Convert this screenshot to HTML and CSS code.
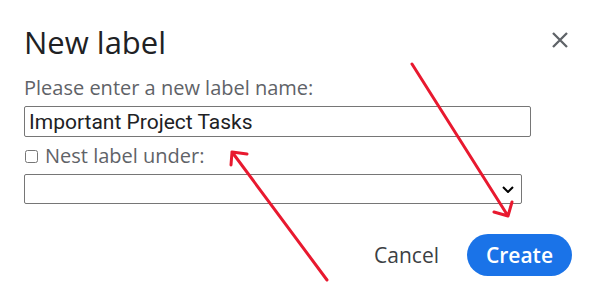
FILE: index.html
```html
<!DOCTYPE html>
<html>
  <head>
    <link rel="stylesheet" href="styles.css">
  </head>
  <body>
    <div class="dialog">
      <div class="header">
        <div class="title">New label</div>
        <button class="close" aria-label="Close">
          <svg width="18" height="18" viewBox="0 0 18 18">
            <path d="M2 2 L16 16 M16 2 L2 16" stroke="#5f6368" stroke-width="2.3" fill="none"/>
          </svg>
        </button>
      </div>
      <div class="label">Please enter a new label name:</div>
      <input class="name" type="text" value="Important Project Tasks">
      <label class="nest"><input type="checkbox">Nest label under:</label>
      <div class="select-wrap">
        <select class="parent"><option></option></select>
        <svg class="chevron" width="12" height="7" viewBox="0 0 12 7">
          <path d="M1 1 L6 6 L11 1" stroke="#000" stroke-width="2" fill="none"/>
        </svg>
      </div>
      <div class="actions">
        <button class="cancel">Cancel</button>
        <button class="create">Create</button>
      </div>
    </div>
    <svg class="arrows" width="600" height="304" viewBox="0 0 600 304">
      <g stroke="#e8192f" stroke-width="3" fill="none" stroke-linecap="round" stroke-linejoin="round">
        <path d="M412 64 L508 216 M494 212 L508 216 L512 202"/>
        <path d="M327 280 L232 152 M247 154 L232 152 L231 165"/>
      </g>
    </svg>
  </body>
</html>
```

FILE: styles.css
```css
body {
    margin: 0;
    background: #fff;
    font-family: "Open Sans", Roboto, sans-serif;
    color: #202124;
}
.dialog {
    width: 600px;
    height: 304px;
    box-sizing: border-box;
    padding: 24px 31px 0 24px;
}
.header {
    display: flex;
    justify-content: space-between;
    align-items: flex-start;
}
.title {
    font-size: 31px;
    line-height: 37px;
}
.close {
    border: none;
    background: none;
    padding: 0;
    margin-top: 7px;
    width: 18px;
    height: 18px;
}
.label, .nest {
    font-size: 20px;
    line-height: 22px;
    color: #5f6368;
}
.label {
    margin-top: 16px;
}
.name {
    display: block;
    box-sizing: border-box;
    width: 507px;
    height: 31px;
    margin: 7px 0 0;
    padding: 0 4px;
    border: 1px solid #767676;
    border-radius: 2px;
    font-family: Roboto, sans-serif;
    font-size: 21px;
    color: #202124;
}
.nest {
    display: flex;
    align-items: center;
    gap: 7px;
    margin-top: 8px;
    padding-left: 1px;
}
.nest input {
    margin: 0;
    width: 13px;
    height: 13px;
}
.select-wrap {
    position: relative;
    width: 498px;
    margin-top: 7px;
}
.parent {
    display: block;
    box-sizing: border-box;
    width: 498px;
    height: 30px;
    border: 1px solid #767676;
    border-radius: 2px;
    background: #fff;
    font-family: inherit;
    font-size: 16px;
    appearance: none;
}
.chevron {
    position: absolute;
    right: 8px;
    top: 12px;
    pointer-events: none;
}
.actions {
    display: flex;
    justify-content: flex-end;
    align-items: center;
    margin-top: 30px;
    margin-right: -3px;
}
.actions button {
    font-family: inherit;
    font-size: 21px;
    border: none;
    height: 42px;
    cursor: pointer;
}
.cancel {
    background: none;
    color: #3c4043;
    padding: 0 12px;
    margin-right: 16px;
}
.create {
    background: #1a73e8;
    color: #fff;
    font-weight: 600;
    border-radius: 21px;
    padding: 0;
    width: 105px;
}
.arrows {
    position: absolute;
    left: 0;
    top: 0;
    pointer-events: none;
}
```
